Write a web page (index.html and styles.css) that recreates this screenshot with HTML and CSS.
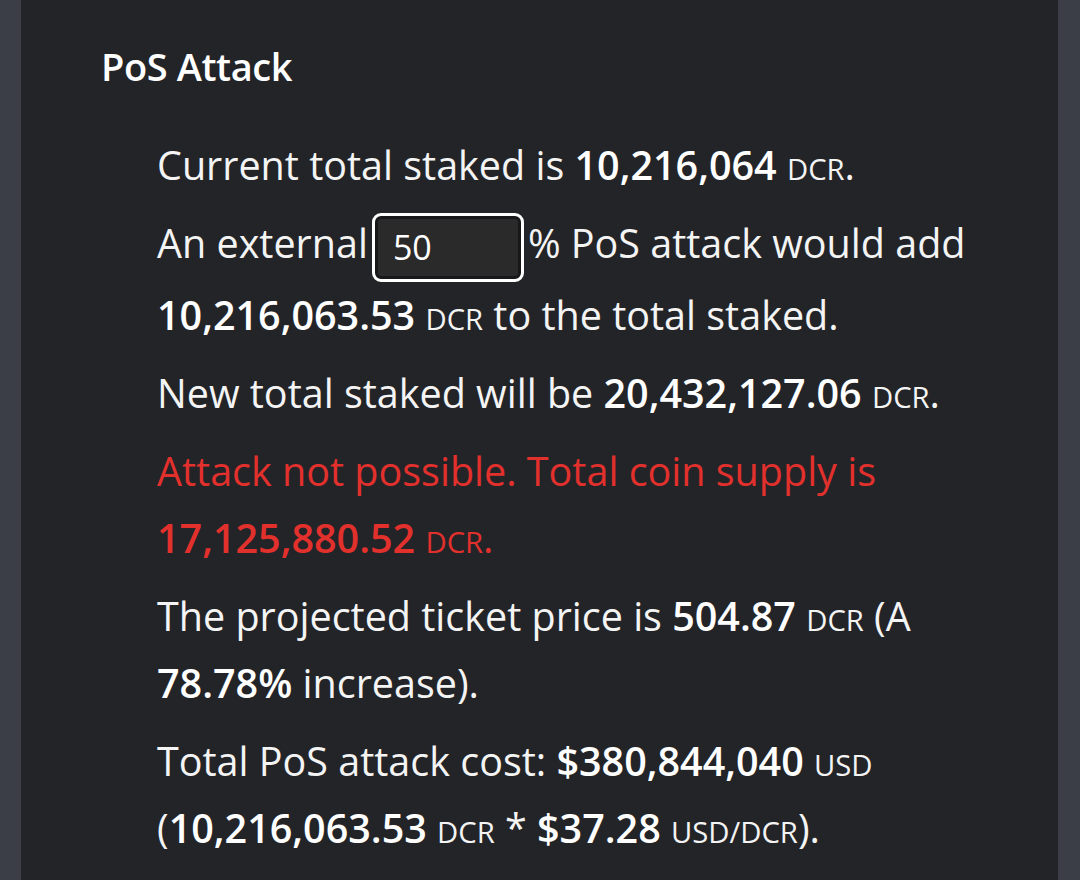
FILE: index.html
```html
<!DOCTYPE html>
<html>
<head>
  <meta charset="utf-8">
  <link rel="stylesheet" href="styles.css">
</head>
<body>
  <div class="panel">
    <h3 class="title">PoS Attack</h3>

    <div class="calc">
      <p>Current total staked is <b>10,216,064</b> <span class="unit">DCR</span>.</p>
      <p>An external<input type="text" class="pct-input" value="50">% PoS attack would add <b>10,216,063.53</b> <span class="unit">DCR</span> to the total staked.</p>
      <p>New total staked will be <b>20,432,127.06</b> <span class="unit">DCR</span>.</p>
      <p class="error">Attack not possible. Total coin supply is <b>17,125,880.52</b> <span class="unit">DCR</span>.</p>
      <p>The projected ticket price is <b>504.87</b> <span class="unit">DCR</span> (A <b>78.78%</b> increase).</p>
      <p>Total PoS attack cost: <b>$380,844,040</b> <span class="unit">USD</span> (<b>10,216,063.53</b> <span class="unit">DCR</span> * <b>$37.28</b> <span class="unit">USD/DCR</span>).</p>
    </div>
  </div>
</body>
</html>
```

FILE: styles.css
```css
body {
  margin: 0;
  background: #3b3e46;
  font-family: 'Open Sans', 'Liberation Sans', sans-serif;
  color: #f4f4f4;
}

.panel {
  margin: 0 22px 0 21px;
  min-height: 880px;
  background: #232428;
  padding: 40px 40px 0 80px;
  box-sizing: border-box;
}

.title {
  margin: 0 0 40px 0;
  font-size: 38px;
  font-weight: 600;
  line-height: 52px;
  letter-spacing: -0.4px;
  color: #fff;
}

.calc {
  padding-left: 56px;
  font-size: 39.5px;
  line-height: 67px;
}

.calc p {
  margin: 0 0 11px 0;
}

.calc b {
  font-weight: 600;
  color: #fff;
}

.unit {
  font-size: 0.74em;
  line-height: 1;
  text-transform: uppercase;
}

.error,
.error b {
  color: #e2302d;
}

.pct-input {
  width: 152px;
  height: 69px;
  margin: 0 4px 0 4px;
  padding: 0 0 0 18px;
  box-sizing: border-box;
  border: 3px solid #ffffff;
  border-radius: 9px;
  background: #2a2a2b;
  box-shadow: inset 0 0 0 3px #18181a;
  color: #fff;
  font-family: inherit;
  font-size: 34px;
  vertical-align: middle;
  outline: none;
}
```
